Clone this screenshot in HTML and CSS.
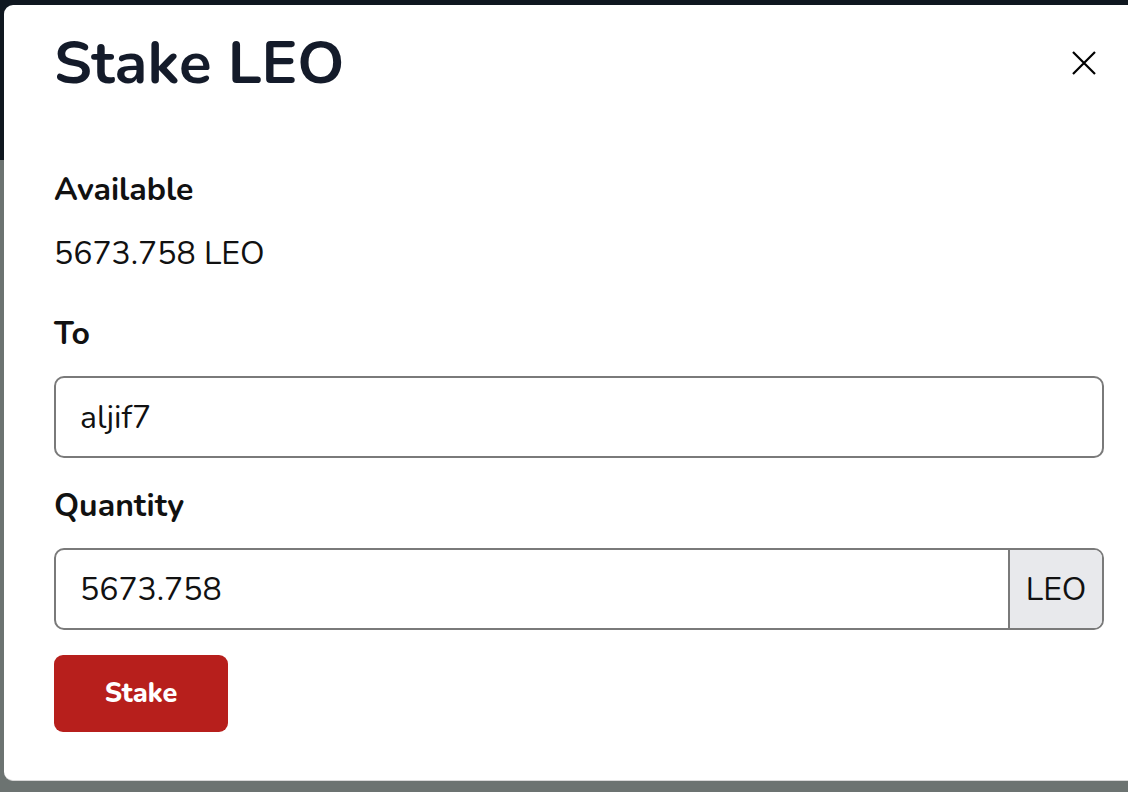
FILE: index.html
```html
<!DOCTYPE html>
<html lang="en">
<head>
<meta charset="utf-8">
<title>Stake LEO</title>
<link rel="stylesheet" href="styles.css">
</head>
<body>
<div class="backdrop">
  <div class="modal">
    <div class="modal-header">
      <h1 class="modal-title">Stake LEO</h1>
      <button class="close" aria-label="Close">
        <svg width="24" height="24" viewBox="0 0 24 24"><path d="M1 1 L23 23 M23 1 L1 23" stroke="#000" stroke-width="2.2" fill="none"/></svg>
      </button>
    </div>
    <div class="modal-body">
      <div class="label label-first">Available</div>
      <div class="value">5673.758 LEO</div>
      <div class="label">To</div>
      <div class="field">
        <div class="field-text">aljif7</div>
      </div>
      <div class="label">Quantity</div>
      <div class="field group">
        <div class="field-text grow">5673.758</div>
        <div class="addon">LEO</div>
      </div>
      <button class="btn">Stake</button>
    </div>
  </div>
</div>
</body>
</html>
```
FILE: styles.css
```css
html, body {
  margin: 0;
  padding: 0;
  height: 100%;
  overflow: hidden;
}
body {
  background: linear-gradient(#0f1720 0, #0f1720 160px, #6c7371 160px, #6c7371 100%);
  font-family: "Nunito", "Lato", "Noto Sans", sans-serif;
  color: #111;
}
.backdrop {
  padding: 5px 0 0 4px;
}
.modal {
  width: 1160px;
  height: 776px;
  background: #fff;
  border-radius: 9px;
  box-sizing: border-box;
  border-bottom: 1px solid #d8d8d8;
  padding: 21px 0 0 50px;
}
.modal-header {
  display: flex;
  align-items: center;
  width: 1046px;
  justify-content: space-between;
}
.modal-title {
  margin: 0;
  font-size: 60px;
  line-height: 74px;
  font-weight: 700;
  color: #141b2a;
}
.close {
  border: 0;
  background: none;
  padding: 0;
  width: 24px;
  height: 24px;
  display: flex;
  margin-right: 4px;
}
.modal-body {
  width: 1050px;
  display: flex;
  flex-direction: column;
  align-items: flex-start;
}
.label {
  font-weight: 700;
  font-size: 32px;
  line-height: 44px;
  margin: 0 0 20px;
}
.label-first {
  margin-top: 68px;
}
.value {
  font-size: 32px;
  line-height: 44px;
  margin: 0 0 36px;
}
.field {
  box-sizing: border-box;
  width: 1050px;
  height: 82px;
  border: 2px solid #7a7a7a;
  border-radius: 10px;
  display: flex;
  align-items: center;
  overflow: hidden;
  margin-bottom: 26px;
}
.field.group {
  margin-bottom: 25px;
}
.field-text {
  padding-left: 24px;
  font-size: 32px;
  color: #111;
}
.grow {
  flex: 1;
}
.group .addon {
  align-self: stretch;
  width: 92px;
  background: #e8e9ec;
  border-left: 2px solid #7a7a7a;
  display: flex;
  align-items: center;
  justify-content: center;
  font-size: 32px;
  color: #111;
}
.btn {
  width: 174px;
  height: 77px;
  border: 0;
  border-radius: 9px;
  background: #b71f1c;
  color: #fff;
  font-family: inherit;
  font-weight: 800;
  font-size: 27px;
  padding: 0;
}
```
